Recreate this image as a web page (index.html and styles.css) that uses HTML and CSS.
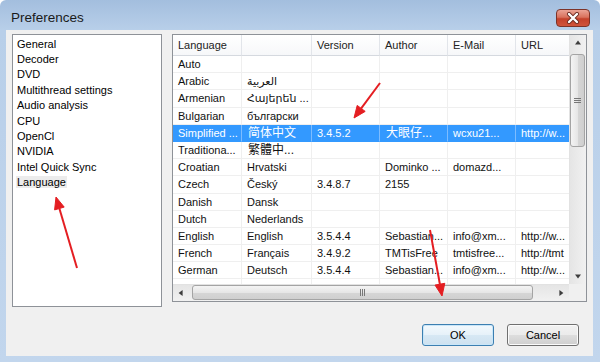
FILE: index.html
```html
<!DOCTYPE html>
<html lang="en">

<head>
    <meta charset="UTF-8">
    <meta name="viewport" content="width=device-width, initial-scale=1.0">
    <title>Preferences</title>
    <link rel="stylesheet" href="styles.css">
</head>

<body>
    <div class="window">
        <div class="titlebar">
            <span class="title">Preferences</span>
            <button class="close" type="button">
                <svg width="14" height="12" viewBox="0 0 14 12">
                    <path d="M3 2 L11 10 M11 2 L3 10" stroke="#6b2a20" stroke-width="4" stroke-linecap="round" />
                    <path d="M3 2 L11 10 M11 2 L3 10" stroke="#fff" stroke-width="2.4" stroke-linecap="round" />
                </svg>
            </button>
        </div>
        <div class="client">
            <div class="panes">
                <ul class="nav">
                    <li>General</li>
                    <li>Decoder</li>
                    <li>DVD</li>
                    <li>Multithread settings</li>
                    <li>Audio analysis</li>
                    <li>CPU</li>
                    <li>OpenCl</li>
                    <li>NVIDIA</li>
                    <li>Intel Quick Sync</li>
                    <li><span class="current">Language</span></li>
                </ul>
                <div class="list">
                    <div class="view">
                        <div class="row head">
                            <span>Language</span><span></span><span>Version</span><span>Author</span><span>E-Mail</span><span>URL</span>
                        </div>
                        <div class="row"><span>Auto</span><span></span><span></span><span></span><span></span><span></span></div>
                        <div class="row"><span>Arabic</span><span>العربية</span><span></span><span></span><span></span><span></span></div>
                        <div class="row"><span>Armenian</span><span>Հայերեն ...</span><span></span><span></span><span></span><span></span></div>
                        <div class="row"><span>Bulgarian</span><span>български</span><span></span><span></span><span></span><span></span></div>
                        <div class="row selected"><span>Simplified ...</span><span class="cjk">简体中文</span><span>3.4.5.2</span><span class="cjk">大眼仔...</span><span>wcxu21...</span><span>http://w...</span></div>
                        <div class="row"><span>Traditiona...</span><span class="cjk">繁體中...</span><span></span><span></span><span></span><span></span></div>
                        <div class="row"><span>Croatian</span><span>Hrvatski</span><span></span><span>Dominko ...</span><span>domazd...</span><span></span></div>
                        <div class="row"><span>Czech</span><span>Český</span><span>3.4.8.7</span><span>2155</span><span></span><span></span></div>
                        <div class="row"><span>Danish</span><span>Dansk</span><span></span><span></span><span></span><span></span></div>
                        <div class="row"><span>Dutch</span><span>Nederlands</span><span></span><span></span><span></span><span></span></div>
                        <div class="row"><span>English</span><span>English</span><span>3.5.4.4</span><span>Sebastian...</span><span>info@xm...</span><span>http://w...</span></div>
                        <div class="row"><span>French</span><span>Français</span><span>3.4.9.2</span><span>TMTisFree</span><span>tmtisfree...</span><span>http://tmt</span></div>
                        <div class="row"><span>German</span><span>Deutsch</span><span>3.5.4.4</span><span>Sebastian...</span><span>info@xm...</span><span>http://w...</span></div>
                        <div class="row"><span></span><span></span><span></span><span></span><span></span><span></span></div>
                    </div>
                    <div class="vscroll">
                        <div class="arrow up"></div>
                        <div class="thumb vthumb"><i></i><i></i><i></i></div>
                        <div class="arrow down"></div>
                    </div>
                    <div class="hscroll">
                        <div class="arrow left"></div>
                        <div class="thumb hthumb"><i></i><i></i><i></i></div>
                        <div class="arrow right"></div>
                    </div>
                    <div class="corner"></div>
                </div>
            </div>
            <div class="buttons">
                <button class="btn default" type="button">OK</button>
                <button class="btn" type="button">Cancel</button>
            </div>
        </div>

        <!-- red hint arrows drawn over the dialog -->
        <svg class="marks" width="600" height="362" viewBox="0 0 600 362">
            <g stroke="#e41e22" stroke-width="2" fill="#e41e22">
                <line x1="77" y1="268" x2="59.4" y2="208.5" />
                <polygon points="56,197 64.2,207.1 54.6,209.9" stroke-width="1" />
                <line x1="380" y1="83" x2="361.2" y2="108.4" />
                <polygon points="354,118 365.2,111.4 357.2,105.4" stroke-width="1" />
                <line x1="430" y1="230" x2="439.9" y2="284.2" />
                <polygon points="442,296 444.8,283.3 435,285.1" stroke-width="1" />
            </g>
        </svg>
    </div>
</body>

</html>
```

FILE: styles.css
```css
* {
    margin: 0;
    padding: 0;
    box-sizing: border-box;
}

body {
    background: #fff;
    font-family: "Liberation Sans", "DejaVu Sans", "Noto Sans CJK SC", sans-serif;
    font-size: 11px;
    color: #111;
}

.window {
    position: relative;
    width: 600px;
    height: 362px;
    padding: 0 7px 6px 6px;
    display: flex;
    flex-direction: column;
    border-radius: 6px 6px 0 0;
    background: linear-gradient(180deg, #a3bede 0%, #b8cfe9 30px, #c2d6ed 100%);
}

.titlebar {
    height: 30px;
    display: flex;
    align-items: flex-start;
}

.title {
    margin: 10px 0 0 5px;
    line-height: 16px;
    font-size: 13.5px;
    color: #1a1a1a;
}

.close {
    margin: 9px 3px 0 auto;
    width: 34px;
    height: 18px;
    border: 1px solid #7d3328;
    border-radius: 4px;
    background: linear-gradient(180deg, #eba395 0%, #d9725d 45%, #c4412b 55%, #d0543b 100%);
    display: flex;
    align-items: center;
    justify-content: center;
}

.client {
    flex: 1;
    background: #f0f0f0;
    padding: 4px 6px 0 6px;
}

.panes {
    display: flex;
    align-items: flex-start;
    gap: 10px;
}

.nav {
    list-style: none;
    width: 150px;
    height: 273px;
    background: #fff;
    border: 1px solid #8e9298;
    padding: 1.6px 0 0 4px;
    color: #000;
}

.nav li {
    line-height: 15.4px;
}

.nav .current {
    background: #ececec;
    padding: 0 1px;
    margin-left: -1px;
}

.list {
    width: 415px;
    height: 268px;
    border: 1px solid #8e9298;
    background: #fff;
    display: grid;
    grid-template-columns: 1fr 17px;
    grid-template-rows: 1fr 17px;
    overflow: hidden;
}

.view {
    overflow: hidden;
}

.row {
    display: grid;
    grid-template-columns: 69px 70px 68px 68px 68px 90px;
    height: 17.2px;
}

.row span {
    padding-left: 5px;
    line-height: 16.2px;
    white-space: nowrap;
    overflow: hidden;
    border-right: 1px solid #efefef;
    border-bottom: 1px solid #efefef;
    color: #111;
}

.row.head {
    height: 21px;
    background: linear-gradient(180deg, #ffffff, #f6f7f9);
}

.row.head span {
    line-height: 20px;
    border-right-color: #e2e5ea;
    border-bottom-color: #d5d9df;
    color: #222;
}

.row.selected {
    background: #3399ff;
}

.row.selected span {
    color: #fff;
    border-right-color: #7dbcff;
    border-bottom-color: #3399ff;
}

.row span.cjk {
    font-size: 12px;
    padding-left: 6px;
}

.vscroll,
.hscroll {
    display: flex;
    background: #ebebeb;
}

.vscroll {
    flex-direction: column;
    border-left: 1px solid #e2e2e2;
    background: linear-gradient(90deg, #e5e5e5, #f1f1f1);
}

.hscroll {
    border-top: 1px solid #e2e2e2;
    background: linear-gradient(180deg, #e5e5e5, #f1f1f1);
}

.corner {
    background: #f0f0f0;
}

.arrow {
    width: 16px;
    height: 16px;
    flex: none;
    position: relative;
}

.arrow::after {
    content: '';
    position: absolute;
    left: 50%;
    top: 50%;
    width: 0;
    height: 0;
    border: 3.5px solid transparent;
}

.arrow.up::after {
    border-bottom: 4px solid #3d3d3d;
    border-top: 0;
    transform: translate(-50%, -60%);
}

.arrow.down {
    margin-top: auto;
}

.arrow.down::after {
    border-top: 4px solid #3d3d3d;
    border-bottom: 0;
    transform: translate(-50%, -40%);
}

.arrow.left::after {
    border-right: 4px solid #3d3d3d;
    border-left: 0;
    transform: translate(-60%, -50%);
}

.arrow.right {
    margin-left: auto;
}

.arrow.right::after {
    border-left: 4px solid #3d3d3d;
    border-right: 0;
    transform: translate(-40%, -50%);
}

.thumb {
    border: 1px solid #a4a4a4;
    border-radius: 3px;
    display: flex;
    align-items: center;
    justify-content: center;
    gap: 1px;
}

.vthumb {
    margin: 3px 0 0 0;
    width: 15px;
    height: 93px;
    flex-direction: column;
    background: linear-gradient(90deg, #f4f4f4, #e6e6e6 50%, #d6d6d6 51%, #cfcfcf);
}

.vthumb i {
    width: 7px;
    height: 1px;
    background: #777;
}

.hthumb {
    margin: 0 0 0 3px;
    width: 341px;
    height: 15px;
    background: linear-gradient(180deg, #f4f4f4, #e6e6e6 50%, #d6d6d6 51%, #cfcfcf);
}

.hthumb i {
    width: 1px;
    height: 7px;
    background: #777;
}

.buttons {
    display: flex;
    justify-content: flex-end;
    gap: 13px;
    margin-top: 17px;
    padding-right: 8px;
}

.btn {
    width: 72px;
    height: 22px;
    border: 1px solid #707070;
    border-radius: 3px;
    font-family: "Liberation Sans", sans-serif;
    font-size: 11px;
    color: #000;
    background: linear-gradient(180deg, #f2f2f2 0%, #ebebeb 50%, #dddddd 51%, #cfcfcf 100%);
    box-shadow: inset 0 0 0 1px #fbfbfb;
}

.btn.default {
    border-color: #3c7fb1;
    box-shadow: inset 0 0 0 1px #c9e6f8;
    background: linear-gradient(180deg, #f3f9fd 0%, #e6f1f9 50%, #d7e8f4 51%, #cde1ef 100%);
}

.marks {
    position: absolute;
    left: 0;
    top: 0;
    pointer-events: none;
}
```
